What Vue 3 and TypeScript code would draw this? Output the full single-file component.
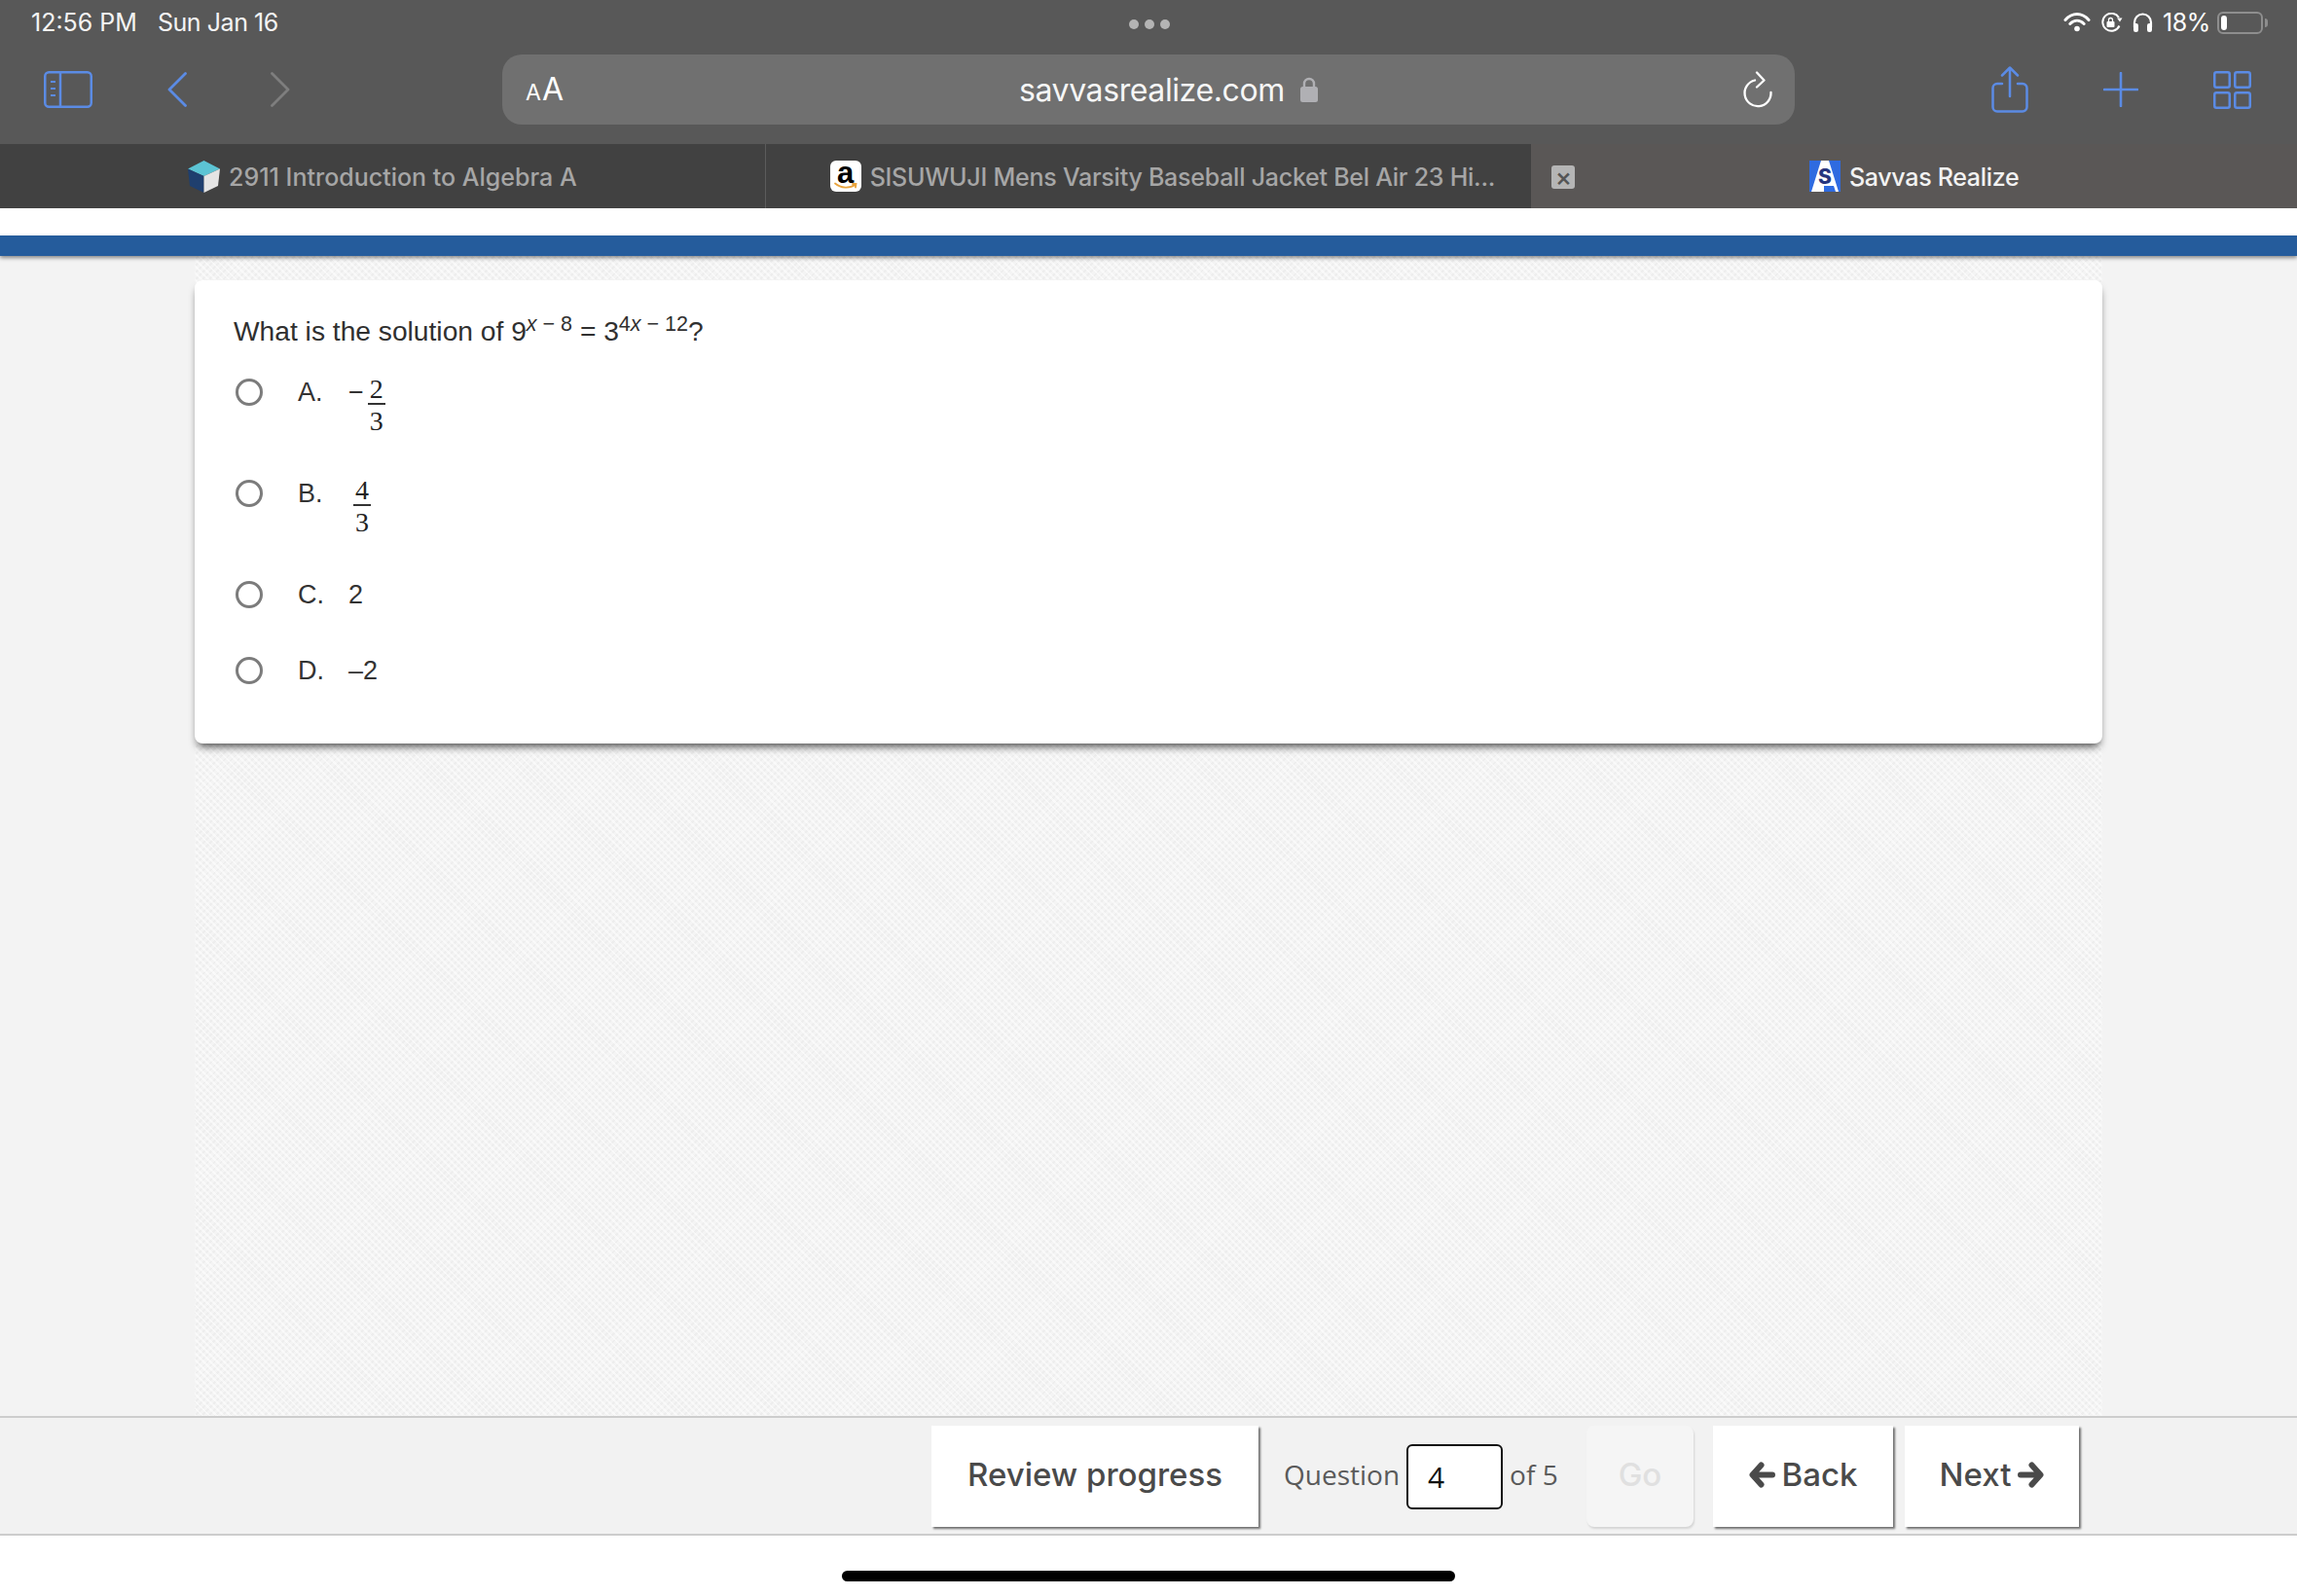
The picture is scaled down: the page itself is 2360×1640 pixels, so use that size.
<template>
  <div class="page">
    <!-- Safari chrome -->
    <header class="chrome">
      <div class="status-bar">
        <div class="status-left">
          <span>12:56 PM</span>
          <span class="status-date">Sun Jan 16</span>
        </div>
        <div class="dots"><i></i><i></i><i></i></div>
        <div class="status-right">
          <svg class="wifi" width="28" height="20" viewBox="0 0 28 20" fill="none" stroke="#fff" stroke-linecap="round">
            <path d="M2 7.500C9-.5 19-.5 26 7.500" stroke-width="3" />
            <path d="M6.800 11.500c4.400-4.300 10-4.300 14.400 0" stroke-width="3" />
            <circle cx="14" cy="16.500" r="2.800" fill="#fff" stroke="none" />
          </svg>
          <svg width="23" height="20" viewBox="0 0 23 20" fill="none">
            <path d="M19.500 13.500A9 9 0 1 1 19 5" stroke="#fff" stroke-width="2" />
            <path d="M17 5.500h5.500L20 9.500z" fill="#fff" />
            <rect x="6.500" y="9" width="8" height="6" rx="1" fill="#fff" />
            <path d="M8.500 9V7.500a2 2 0 0 1 4 0V9" stroke="#fff" stroke-width="1.300" />
          </svg>
          <svg width="21" height="20" viewBox="0 0 21 20" fill="none">
            <path d="M2 15V10a8.500 8.500 0 0 1 17 0v5" stroke="#fff" stroke-width="2.200" />
            <rect x="1" y="11" width="5" height="9" rx="2.200" fill="#fff" />
            <rect x="15" y="11" width="5" height="9" rx="2.200" fill="#fff" />
          </svg>
          <span class="battery-text">18%</span>
          <div class="battery"><div class="battery-fill"></div></div>
          <div class="battery-nub"></div>
        </div>
      </div>

      <div class="toolbar">
        <div class="tool-left">
          <svg width="50" height="38" viewBox="0 0 50 38" fill="none" stroke="#5b8be4" stroke-width="2.500">
            <rect x="1.250" y="1.250" width="47.500" height="35.500" rx="4" />
            <path d="M17 1v36" />
            <path d="M7 11h5M7 18h5M7 25h5" stroke-width="2" />
          </svg>
          <svg class="chev-back" width="20" height="36" viewBox="0 0 20 36" fill="none" stroke="#5b8be4" stroke-width="2.800" stroke-linecap="round" stroke-linejoin="round">
            <path d="M18.500 1.500 2 18l16.500 16.500" />
          </svg>
          <svg class="chev-fwd" width="20" height="36" viewBox="0 0 20 36" fill="none" stroke="#7e7e7e" stroke-width="2.800" stroke-linecap="round" stroke-linejoin="round">
            <path d="M1.500 1.500 18 18 1.500 34.500" />
          </svg>
        </div>

        <div class="url-bar">
          <span class="aa"><small>A</small>A</span>
          <div class="url">
            <span>savvasrealize.com</span>
            <svg width="18" height="26" viewBox="0 0 18 26" fill="none">
              <path d="M4 11V7a5 5 0 0 1 10 0v4" stroke="#b0b0b4" stroke-width="2.400" />
              <rect y="10" width="18" height="16" rx="2.500" fill="#b0b0b4" />
            </svg>
          </div>
          <svg width="32" height="38" viewBox="0 0 32 38" fill="none" stroke="#fff" stroke-width="2.300" stroke-linecap="round" stroke-linejoin="round">
            <path d="M13 9.500A13.500 13.500 0 1 0 29.500 22" />
            <path d="M15 1.500l7.500 8-7.500 7" />
          </svg>
        </div>

        <div class="tool-right">
          <svg width="38" height="48" viewBox="0 0 38 48" fill="none" stroke="#5b8be4" stroke-width="2.500" stroke-linecap="round" stroke-linejoin="round">
            <path d="M11 18H6a4.500 4.500 0 0 0-4.500 4.500V42A4.500 4.500 0 0 0 6 46.500h26a4.500 4.500 0 0 0 4.500-4.500V22.500A4.500 4.500 0 0 0 32 18h-5" />
            <path d="M19 31V2M11 9.500l8-8 8 8" />
          </svg>
          <svg width="36" height="36" viewBox="0 0 36 36" fill="none" stroke="#5b8be4" stroke-width="2.600" stroke-linecap="round">
            <path d="M18 1v34M1 18h34" />
          </svg>
          <svg width="39" height="39" viewBox="0 0 39 39" fill="none" stroke="#5b8be4" stroke-width="2.500">
            <rect x="1.250" y="1.250" width="15.500" height="15.500" rx="2" />
            <rect x="22.250" y="1.250" width="15.500" height="15.500" rx="2" />
            <rect x="1.250" y="22.250" width="15.500" height="15.500" rx="2" />
            <rect x="22.250" y="22.250" width="15.500" height="15.500" rx="2" />
          </svg>
        </div>
      </div>

      <nav class="tabs">
        <div class="tab tab-first">
          <svg width="33" height="33" viewBox="0 0 33 33">
            <path d="M16.500 0 33 8.500 16.500 16 0 8.500z" fill="#5cc4d4" />
            <path d="M0 8.500 16.500 16v17L2 26z" fill="#1f3f6e" />
            <path d="M33 8.500 16.500 16v17L31 26z" fill="#e4e4e4" />
          </svg>
          <span>2911 Introduction to Algebra A</span>
        </div>
        <div class="tab tab-second">
          <div class="amazon">
            <span>a</span>
            <svg width="24" height="9" viewBox="0 0 24 9" fill="none" stroke="#e8a33c" stroke-width="1.800" stroke-linecap="round">
              <path d="M1 1.500C7 6.500 16 7 22 2.500M19 2h3.500l-.5 3.500" />
            </svg>
          </div>
          <span class="tab-title">SISUWUJI Mens Varsity Baseball Jacket Bel Air 23 Hi...</span>
        </div>
        <div class="tab tab-active">
          <div class="tab-close">×</div>
          <div class="savvas">
            <svg width="32" height="32" viewBox="0 0 32 32">
              <rect width="32" height="32" fill="#2f6be0" />
              <path d="M12 0h8l10 32H2z" fill="#fff" />
              <path d="M15 26h10l2 6H15z" fill="#2f6be0" />
            </svg>
            <span>S</span>
          </div>
          <span class="active-title">Savvas Realize</span>
        </div>
      </nav>
    </header>

    <div class="top-strip"></div>
    <div class="blue-bar"></div>

    <!-- Question area -->
    <main class="content">
      <section class="card">
        <p class="question">
          What is the solution of 9<sup><em>x</em> − 8</sup> = 3<sup>4<em>x</em> − 12</sup>?
        </p>
        <div v-for="choice in choices" :key="choice.letter" class="choice" :class="{ tall: choice.fraction }">
          <span class="radio"></span>
          <span class="letter">{{ choice.letter }}.</span>
          <span class="answer" :class="{ 'answer-b': choice.letter === 'B' }">
            <span v-if="choice.prefix" class="minus">{{ choice.prefix }}</span>
            <span v-if="choice.fraction" class="fraction">
              <span class="num">{{ choice.fraction[0] }}</span>
              <span class="den">{{ choice.fraction[1] }}</span>
            </span>
            <span v-if="choice.text">{{ choice.text }}</span>
          </span>
        </div>
      </section>
    </main>

    <!-- Bottom navigation -->
    <footer class="footer">
      <button class="btn review">Review progress</button>
      <div class="jump">
        <span>Question</span>
        <input class="jump-input" type="text" value="4" />
        <span>of 5</span>
      </div>
      <button class="btn go">Go</button>
      <button class="btn back">
        <svg width="27" height="27" viewBox="0 0 27 27" fill="none" stroke="#4a4a4a" stroke-width="6" stroke-linecap="round" stroke-linejoin="round">
          <path d="M12.500 3.500 3.500 13.500l9 10M4 13.500h20" />
        </svg>
        Back
      </button>
      <button class="btn next">
        Next
        <svg width="27" height="27" viewBox="0 0 27 27" fill="none" stroke="#4a4a4a" stroke-width="6" stroke-linecap="round" stroke-linejoin="round">
          <path d="M14.500 3.500l9 10-9 10M23 13.500H3" />
        </svg>
      </button>
    </footer>

    <div class="home-area"><div class="home-bar"></div></div>
  </div>
</template>

<script setup lang="ts">
interface Choice {
  letter: string;
  prefix?: string;
  fraction?: [string, string];
  text?: string;
}

const choices: Choice[] = [
  { letter: 'A', prefix: '−', fraction: ['2', '3'] },
  { letter: 'B', fraction: ['4', '3'] },
  { letter: 'C', text: '2' },
  { letter: 'D', text: '–2' },
];
</script>

<style>
html,
body {
  margin: 0;
  background: #fff;
}
</style>

<style scoped>
.page {
  width: 2360px;
  height: 1640px;
  display: flex;
  flex-direction: column;
  overflow: hidden;
  background: #fff;
  font-family: 'Liberation Sans', Arial, sans-serif;
}

/* Browser chrome */
.chrome {
  background: #585858;
  color: #fff;
  font-family: Inter, 'Liberation Sans', sans-serif;
}

.status-bar {
  height: 46px;
  box-sizing: border-box;
  padding: 0 30px 0 32px;
  display: grid;
  grid-template-columns: 1fr auto 1fr;
  align-items: center;
  font-size: 25px;
}

.status-left {
  display: flex;
  gap: 21px;
  color: #f4f4f4;
}

.status-date {
  letter-spacing: -0.45px;
}

.dots {
  display: flex;
  gap: 6px;
  padding-top: 4px;
}

.dots i {
  width: 10px;
  height: 10px;
  border-radius: 50%;
  background: #b4b4b4;
}

.status-right {
  display: flex;
  align-items: center;
  justify-content: flex-end;
  gap: 10px;
}

.battery-text {
  font-size: 25px;
  letter-spacing: -0.4px;
}

.battery {
  width: 47px;
  height: 23px;
  box-sizing: border-box;
  border: 2px solid #8e8e8e;
  border-radius: 6px;
  padding: 2px;
  margin-left: -3px;
}

.battery-fill {
  width: 6px;
  height: 100%;
  background: #fff;
  border-radius: 3px;
}

.battery-nub {
  width: 3px;
  height: 9px;
  background: #8e8e8e;
  border-radius: 0 3px 3px 0;
  margin-left: -8px;
}

.toolbar {
  height: 102px;
  box-sizing: border-box;
  padding: 10px 46px 20px 45px;
  display: flex;
  align-items: center;
}

.tool-left {
  width: 471px;
  display: flex;
  align-items: center;
}

.chev-back {
  margin-left: 77px;
}

.chev-fwd {
  margin-left: 86px;
}

.url-bar {
  width: 1328px;
  height: 72px;
  box-sizing: border-box;
  padding: 0 22px 0 24px;
  background: #707070;
  border-radius: 20px;
  display: flex;
  align-items: center;
  justify-content: space-between;
  position: relative;
}

.aa {
  font-size: 32px;
  line-height: 1;
}

.aa small {
  font-size: 23px;
  margin-right: 1px;
}

.url {
  position: absolute;
  left: 531px;
  display: flex;
  align-items: center;
  gap: 16px;
  font-size: 32px;
  letter-spacing: -0.4px;
  color: #f6f6f6;
}

.tool-right {
  flex: 1;
  display: flex;
  align-items: center;
  padding-left: 202px;
  gap: 77px;
}

.tabs {
  height: 66px;
  display: grid;
  grid-template-columns: repeat(3, 1fr);
  font-size: 25px;
  font-weight: 500;
}

.tab {
  display: flex;
  align-items: center;
  justify-content: center;
  gap: 9px;
  position: relative;
  white-space: nowrap;
  color: #a6a6a6;
}

.tab > span {
  padding-top: 2px;
}

.tab-first,
.tab-second {
  background: #414141;
}

.tab-first {
  border-right: 1px solid #5c5c5c;
}

.tab-second {
  justify-content: flex-start;
  padding-left: 66px;
}

.tab-title {
  letter-spacing: -0.25px;
}

.tab-active {
  color: #f2f2f2;
  background: #5a5756;
}

.active-title {
  letter-spacing: -0.3px;
}

.tab-close {
  position: absolute;
  left: 21px;
  top: 22px;
  width: 24px;
  height: 24px;
  border-radius: 3px;
  background: #b5b5b5;
  color: #555;
  font-size: 26px;
  line-height: 23px;
  text-align: center;
}

.amazon {
  width: 32px;
  height: 32px;
  border-radius: 6px;
  background: #fff;
  position: relative;
  display: flex;
  justify-content: center;
  color: #000;
  font-family: 'Liberation Sans', sans-serif;
  font-size: 31px;
  font-weight: 700;
  line-height: 26px;
}

.amazon svg {
  position: absolute;
  left: 4px;
  bottom: 1px;
}

.savvas {
  width: 32px;
  height: 32px;
  position: relative;
  color: #27357e;
  font-size: 21px;
  font-weight: 800;
  line-height: 32px;
  text-align: center;
}

.savvas svg {
  display: block;
}

.savvas span {
  position: absolute;
  inset: 0;
  top: 1px;
}

.top-strip {
  height: 28px;
  background: #fff;
}

.blue-bar {
  height: 21px;
  background: #255c9c;
  box-shadow: 0 2px 4px rgba(0, 0, 0, 0.45);
  position: relative;
}

/* Question area */
.content {
  flex: 1;
  min-height: 0;
  overflow: hidden;
  padding: 0 200px;
  background-color: #f3f3f3;
  background-image:
    repeating-linear-gradient(45deg, rgba(255, 255, 255, 0.5) 0 2px, transparent 2px 5px),
    repeating-linear-gradient(-45deg, rgba(228, 228, 228, 0.4) 0 2px, transparent 2px 5px),
    linear-gradient(#f4f4f4, #f4f4f4);
  background-size: 1960px 100%;
  background-position: 200px 0;
  background-repeat: no-repeat;
}

.card {
  background: #fff;
  border-radius: 8px;
  height: 476px;
  box-sizing: border-box;
  margin-top: 25px;
  padding: 33px 40px 0;
  color: #333;
  box-shadow: 0 6px 8px -3px rgba(0, 0, 0, 0.7);
}

.question {
  margin: 0;
  font-size: 28.2px;
  line-height: 38px;
  color: #303030;
}

.question sup {
  font-size: 21.5px;
  line-height: 0;
  vertical-align: 10px;
}

.choice {
  height: 78px;
  display: flex;
  align-items: flex-start;
}

.question + .choice {
  margin-top: 30px;
}

.choice.tall {
  height: 104px;
}

.radio {
  width: 28px;
  height: 28px;
  box-sizing: border-box;
  border: 3px solid #7c7c7c;
  border-radius: 50%;
  margin-left: 2px;
  flex: none;
}

.letter {
  width: 52px;
  margin-left: 36px;
  font-size: 27px;
  line-height: 28px;
}

.answer {
  display: flex;
  align-items: flex-start;
  font-size: 27px;
  line-height: 28px;
}

.answer-b {
  padding-left: 5px;
}

.minus {
  margin-right: 4px;
}

.fraction {
  display: flex;
  flex-direction: column;
  align-items: center;
  width: 18px;
  font-family: 'Liberation Serif', 'Times New Roman', serif;
  font-size: 28px;
  line-height: 28px;
  color: #222;
}

.num {
  width: 100%;
  text-align: center;
  border-bottom: 2px solid #333;
  height: 25px;
  line-height: 22px;
}

.den {
  height: 28px;
  margin-top: 3px;
}

/* Footer */
.footer {
  height: 123px;
  flex: none;
  box-sizing: border-box;
  border: solid #cdcdcd;
  border-width: 2px 0;
  background: #f2f2f2;
  display: flex;
  align-items: center;
  justify-content: flex-end;
  padding: 0 224px 0 0;
  font-family: 'Open Sans', sans-serif;
}

.btn {
  height: 104px;
  border: none;
  background: #fff;
  color: #4a4a4a;
  font-family: Inter, sans-serif;
  font-size: 33px;
  font-weight: 500;
  display: flex;
  align-items: center;
  justify-content: center;
  gap: 7px;
  box-shadow: 2px 2px 2px rgba(0, 0, 0, 0.55);
  padding: 0 0 3px;
}

.review {
  width: 336px;
}

.jump {
  width: 282px;
  display: flex;
  align-items: center;
  gap: 7px;
  margin-left: 26px;
  color: #5a5a5a;
  font-size: 28px;
}

.jump span {
  padding-bottom: 3px;
}

.jump-input {
  width: 99px;
  height: 67px;
  box-sizing: border-box;
  border: 2px solid #111;
  border-radius: 6px;
  background: #fff;
  font-family: 'Open Sans', sans-serif;
  font-size: 30px;
  color: #111;
  padding: 0 0 0 20px;
  margin: 2px 0 0;
  outline: none;
}

.go {
  width: 110px;
  margin-left: 29px;
  background: #f5f5f5;
  color: #e0e0e0;
  border-radius: 8px;
  box-shadow: 1px 2px 2px rgba(0, 0, 0, 0.12);
}

.back {
  width: 185px;
  margin-left: 20px;
}

.next {
  width: 179px;
  margin-left: 12px;
}

.home-area {
  height: 62px;
  flex: none;
  display: flex;
  justify-content: center;
  align-items: flex-end;
  padding-bottom: 15px;
  box-sizing: border-box;
}

.home-bar {
  width: 630px;
  height: 11px;
  border-radius: 6px;
  background: #000;
}
</style>
